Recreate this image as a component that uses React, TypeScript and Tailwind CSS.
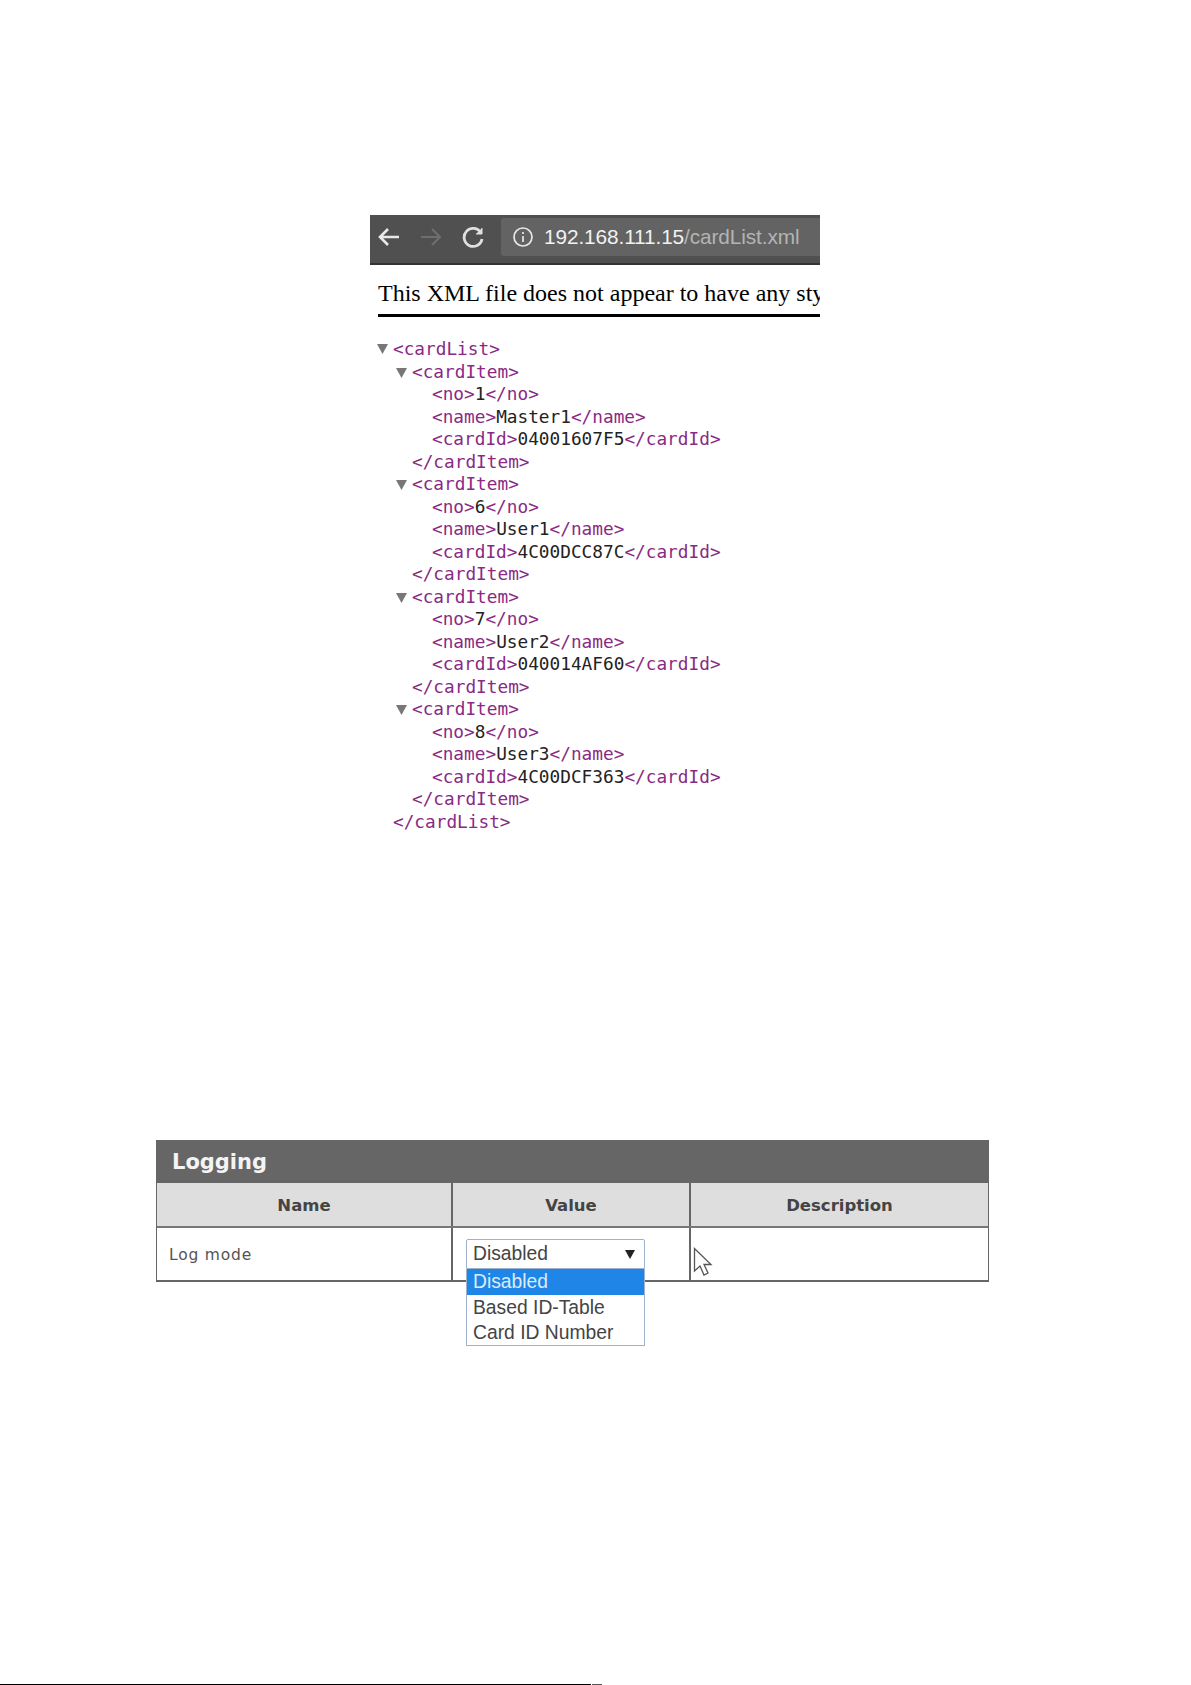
import { ReactNode } from 'react';

const cards = [
  { no: '1', name: 'Master1', cardId: '04001607F5' },
  { no: '6', name: 'User1', cardId: '4C00DCC87C' },
  { no: '7', name: 'User2', cardId: '040014AF60' },
  { no: '8', name: 'User3', cardId: '4C00DCF363' },
];

const Tag = ({ children }: { children: ReactNode }) => <span className="text-[#8a2a85]">{children}</span>;

const Caret = () => (
  <svg width="11" height="10" viewBox="0 0 11 10" className="absolute -left-[16px] top-[6px]">
    <path d="M0 0H11L5.5 10Z" fill="#777" />
  </svg>
);

const Leaf = ({ tag, value }: { tag: string; value: string }) => (
  <div className="pl-[39px]">
    <Tag>&lt;{tag}&gt;</Tag>
    <span className="text-[#222]">{value}</span>
    <Tag>&lt;/{tag}&gt;</Tag>
  </div>
);

export default function App() {
  return (
    <div className="flex h-[1685px] flex-col bg-white font-['Liberation_Sans',sans-serif]">
      {/* browser capture */}
      <div className="ml-[370px] mt-[215px] w-[450px] overflow-hidden">
        <div className="flex h-[50px] items-center border-b-2 border-[#333] bg-[#505050] pb-[4px] pl-[7px]">
          <svg width="24" height="24" viewBox="0 0 24 24" fill="none" stroke="#e8e8e8" strokeWidth="2.6">
            <path d="M22 12H3M11 4l-8 8 8 8" />
          </svg>
          <svg width="24" height="24" viewBox="0 0 24 24" fill="none" stroke="#6e6e6e" strokeWidth="2.2" className="ml-[18px]">
            <path d="M2 12h19M13 4l8 8-8 8" />
          </svg>
          <svg width="24" height="24" viewBox="0 0 24 24" fill="none" stroke="#e0e0e0" strokeWidth="2.8" className="ml-[18px]">
            <path d="M20 8a9 9 0 1 0 1 6" />
            <path d="M21 3v6h-6" fill="#e0e0e0" strokeWidth="1" />
          </svg>
          <div className="ml-[16px] flex h-[38px] flex-1 items-center rounded-l-[3px] bg-[#636363] pl-[11px]">
            <svg width="22" height="22" viewBox="0 0 22 22" fill="none" stroke="#e8e8e8" strokeWidth="1.7">
              <circle cx="11" cy="11" r="9" />
              <path d="M11 10v6M11 6v2" />
            </svg>
            <span className="ml-[10px] whitespace-nowrap text-[20.8px] tracking-[-0.1px] text-[#f2f2f2]">
              192.168.111.15<span className="text-[#b4b4b4]">/cardList.xml</span>
            </span>
          </div>
        </div>
        <div className="ml-[8px] mt-[14px] whitespace-nowrap border-b-[3px] border-black pb-[7px] font-['Liberation_Serif',serif] text-[24px] leading-[28px] text-black">
          This XML file does not appear to have any sty
        </div>
        <div className="relative ml-[23px] mt-[21px] font-['DejaVu_Sans_Mono',monospace] text-[17.75px] leading-[22.5px]">
          <div className="relative">
            <Caret />
            <Tag>&lt;cardList&gt;</Tag>
          </div>
          {cards.map((card) => (
            <div key={card.no}>
              <div className="relative pl-[19px]">
                <span className="relative">
                  <Caret />
                  <Tag>&lt;cardItem&gt;</Tag>
                </span>
              </div>
              <Leaf tag="no" value={card.no} />
              <Leaf tag="name" value={card.name} />
              <Leaf tag="cardId" value={card.cardId} />
              <div className="pl-[19px]">
                <Tag>&lt;/cardItem&gt;</Tag>
              </div>
            </div>
          ))}
          <Tag>&lt;/cardList&gt;</Tag>
        </div>
      </div>

      {/* logging table */}
      <div className="ml-[156px] mt-[307px] w-[833px] font-['DejaVu_Sans',sans-serif]">
        <div className="flex h-[43px] items-center bg-[#666] pl-[16px] pt-[2px] text-[21px] font-bold text-[#f4f4f4]">Logging</div>
        <div className="border-x border-b-2 border-[#666]">
          <div className="grid h-[45px] grid-cols-[296px_1fr_299px] items-center border-b-2 border-[#777] bg-[#dedede] text-center text-[16.5px] font-bold text-[#444]">
            <div className="flex h-full items-center justify-center border-r-2 border-[#666] pt-[3px]">Name</div>
            <div className="pt-[3px]">Value</div>
            <div className="flex h-full items-center justify-center border-l-2 border-[#666] pt-[3px]">Description</div>
          </div>
          <div className="grid h-[52px] grid-cols-[296px_1fr_299px] items-stretch text-[15.5px] text-[#555]">
            <div className="flex items-center border-r-2 border-[#666] pl-[12px] pt-[4px] tracking-[0.8px]">Log mode</div>
            <div className="relative">
              <div className="absolute left-[13px] top-[11px] w-[179px] font-['Liberation_Sans',sans-serif] text-[19.3px] text-[#444]">
                <div className="flex h-[30px] items-center justify-between rounded-t-[2px] border border-[#9db2cc] bg-white pl-[6px] pr-[9px]">
                  <span>Disabled</span>
                  <svg width="10" height="10" viewBox="0 0 10 10">
                    <path d="M0 1H10L5 10Z" fill="#222" />
                  </svg>
                </div>
                <div className="border border-t-0 border-[#9db2cc] bg-white leading-[25px]">
                  <div className="h-[26px] bg-[#1f86e8] pl-[6px] text-[#dcebfa]">Disabled</div>
                  <div className="pl-[6px]">Based ID-Table</div>
                  <div className="pl-[6px]">Card ID Number</div>
                </div>
              </div>
            </div>
            <div className="relative border-l-2 border-[#666]">
              <svg width="20" height="30" viewBox="0 0 20 30" className="absolute left-[2px] top-[19px]">
                <path d="M1.5 1.5V24L7 19L11 28L15 26L11 17.5H18Z" fill="#fff" stroke="#555" strokeWidth="1.3" />
              </svg>
            </div>
          </div>
        </div>
      </div>

      {/* footnote rule */}
      <div className="mt-auto flex h-[1px] shrink-0">
        <div className="w-[591px] bg-black" />
        <div className="ml-[1px] w-[10px] bg-[#555]" />
      </div>
    </div>
  );
}
